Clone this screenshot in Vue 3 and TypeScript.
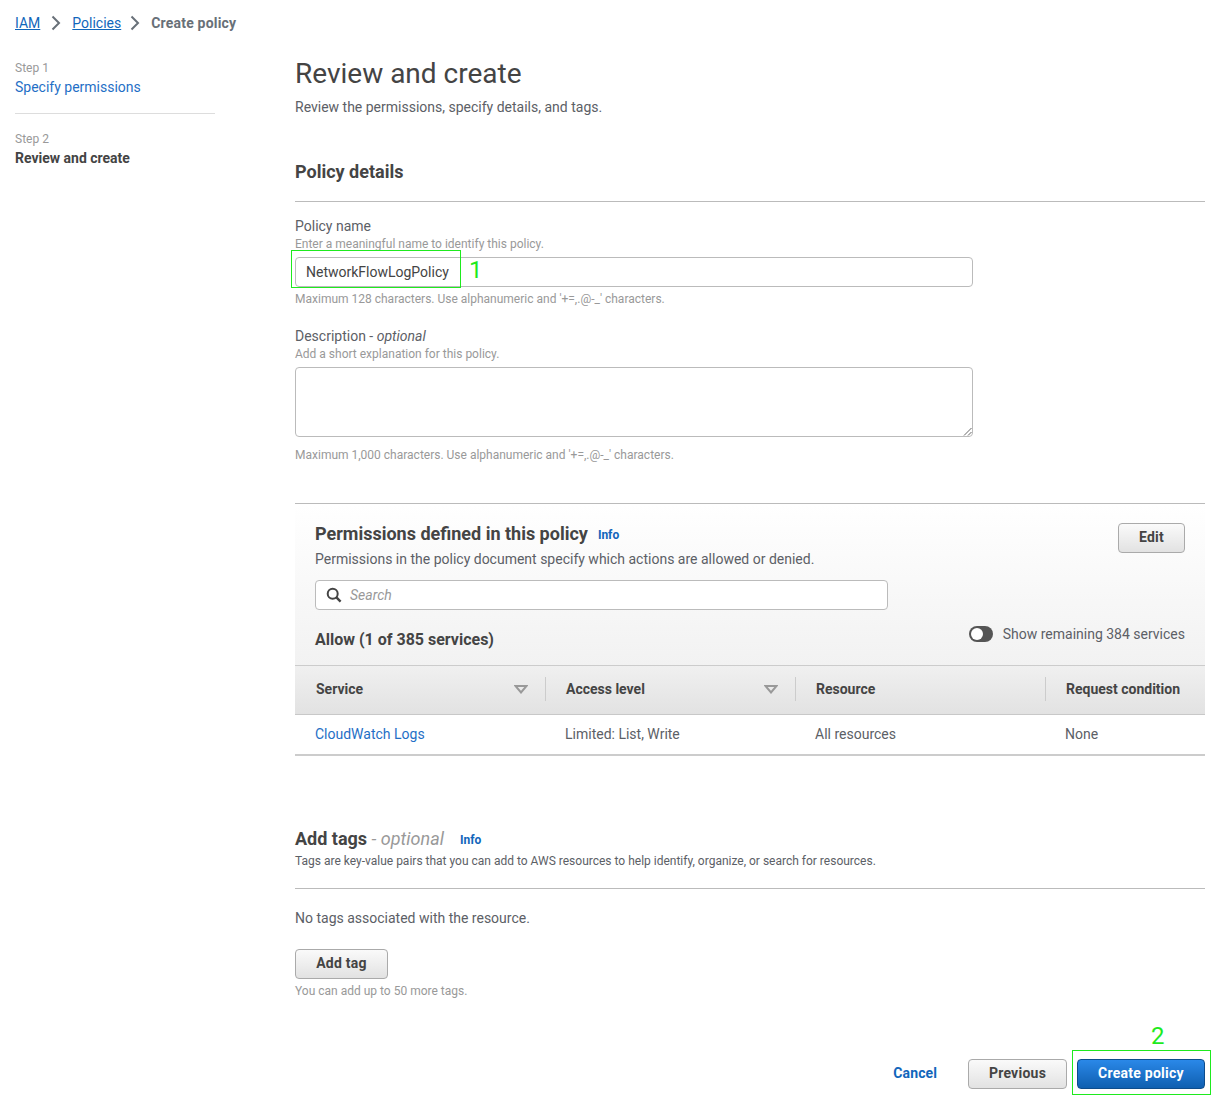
<template>
  <div class="page">
    <!-- breadcrumb -->
    <nav class="crumbs">
      <a class="crumb-link">IAM</a>
      <svg class="chev" width="10" height="16" viewBox="0 0 10 16"><path d="M1.5 1.5 L8 8 L1.5 14.5" fill="none" stroke="#687078" stroke-width="2" /></svg>
      <a class="crumb-link">Policies</a>
      <svg class="chev second" width="10" height="16" viewBox="0 0 10 16"><path d="M1.5 1.5 L8 8 L1.5 14.5" fill="none" stroke="#687078" stroke-width="2" /></svg>
      <span class="crumb-current">Create policy</span>
    </nav>

    <div class="layout">
      <!-- steps -->
      <aside class="steps">
        <div class="step first">
          <div class="step-num">Step 1</div>
          <a class="step-link">Specify permissions</a>
        </div>
        <div class="step">
          <div class="step-num">Step 2</div>
          <div class="step-active">Review and create</div>
        </div>
      </aside>

      <main class="main">
        <h1 class="title">Review and create</h1>
        <p class="subtitle">Review the permissions, specify details, and tags.</p>

        <h2 class="section-title">Policy details</h2>

        <div class="field name-field">
          <div class="label">Policy name</div>
          <div class="hint">Enter a meaningful name to identify this policy.</div>
          <div class="input-wrap">
            <div class="input">NetworkFlowLogPolicy</div>
            <div class="mark mark-one"></div>
            <span class="mark-num num-one">1</span>
          </div>
          <div class="hint after">Maximum 128 characters. Use alphanumeric and '+=,.@-_' characters.</div>
        </div>

        <div class="field desc-field">
          <div class="label">Description - <i>optional</i></div>
          <div class="hint">Add a short explanation for this policy.</div>
          <div class="textarea">
            <svg class="grip" width="9" height="9" viewBox="0 0 9 9"><path d="M8.5 1 L1 8.5 M8.5 5 L5 8.5" stroke="#666" stroke-width="1" /></svg>
          </div>
          <div class="hint after wide">Maximum 1,000 characters. Use alphanumeric and '+=,.@-_' characters.</div>
        </div>

        <!-- permissions -->
        <section class="perm">
          <div class="perm-top">
            <div class="perm-head">
              <div>
                <div class="perm-title-row">
                  <h2 class="perm-title">Permissions defined in this policy</h2>
                  <a class="info">Info</a>
                </div>
                <p class="perm-desc">Permissions in the policy document specify which actions are allowed or denied.</p>
              </div>
              <button class="btn edit">Edit</button>
            </div>
            <div class="search">
              <svg width="16" height="16" viewBox="0 0 16 16"><circle cx="6.7" cy="6.7" r="5" fill="none" stroke="#444" stroke-width="2" /><path d="M10.4 10.4 L14.6 14.6" stroke="#444" stroke-width="2.4" /></svg>
              <span>Search</span>
            </div>
            <div class="allow-row">
              <div class="allow">Allow (1 of 385 services)</div>
              <div class="toggle-wrap">
                <span class="toggle"><span class="knob"></span></span>
                <span class="toggle-label">Show remaining 384 services</span>
              </div>
            </div>
          </div>

          <div class="table-head">
            <div v-for="col in columns" :key="col.name" class="th">
              <span>{{ col.name }}</span>
              <svg v-if="col.sort" class="sort" width="14" height="9" viewBox="0 0 14 9"><path d="M1.5 1 H12.5 L7 7.5 Z" fill="none" stroke="#999" stroke-width="2" /></svg>
            </div>
          </div>
          <div class="table-row">
            <a class="cell-link">CloudWatch Logs</a>
            <span>Limited: List, Write</span>
            <span>All resources</span>
            <span>None</span>
          </div>
        </section>

        <!-- tags -->
        <section class="tags">
          <div class="tags-title-row">
            <h2 class="tags-title">Add tags <span class="opt">- optional</span></h2>
            <a class="info">Info</a>
          </div>
          <p class="tags-desc">Tags are key-value pairs that you can add to AWS resources to help identify, organize, or search for resources.</p>
          <p class="no-tags">No tags associated with the resource.</p>
          <button class="btn add">Add tag</button>
          <div class="hint after">You can add up to 50 more tags.</div>
        </section>

        <!-- footer buttons -->
        <footer class="actions">
          <a class="cancel">Cancel</a>
          <button class="btn prev">Previous</button>
          <div class="create-wrap">
            <button class="btn create">Create policy</button>
            <div class="mark mark-two"></div>
            <span class="mark-num num-two">2</span>
          </div>
        </footer>
      </main>
    </div>
  </div>
</template>

<script setup lang="ts">
interface Column {
  name: string
  sort: boolean
}

const columns: Column[] = [
  { name: 'Service', sort: true },
  { name: 'Access level', sort: true },
  { name: 'Resource', sort: false },
  { name: 'Request condition', sort: false }
]
</script>

<style>
html,
body {
  margin: 0;
  background: #fff;
}
</style>

<style scoped>
.page {
  width: 1230px;
  height: 1106px;
  overflow: hidden;
  box-sizing: border-box;
  padding: 0 25px 0 15px;
  font-family: Roboto, "Liberation Sans", sans-serif;
  font-size: 14px;
  color: #5c6066;
  line-height: 20px;
}

h1,
h2,
p {
  margin: 0;
}

/* breadcrumb */
.crumbs {
  display: flex;
  align-items: center;
  height: 20px;
  padding-top: 13px;
}

.crumb-link {
  color: #1166bb;
  text-decoration: underline;
}

.chev {
  margin: 0 16px 0 11px;
}

.chev + .crumb-link {
  margin-left: -5px;
}

.chev.second {
  margin: 0 11px 0 9px;
}

.crumb-current {
  font-weight: 700;
  color: #687078;
  letter-spacing: 0.2px;
}

.layout {
  display: flex;
}

/* steps */
.steps {
  width: 200px;
  margin-right: 80px;
  padding-top: 24px;
  flex-shrink: 0;
}

.step.first {
  padding-bottom: 16px;
  border-bottom: 1px solid #ddd;
  margin-bottom: 16px;
}

.step-num {
  margin-top: 2px;
  font-size: 12px;
  line-height: 18px;
  color: #999;
}

.step-link {
  color: #1f6fc6;
  display: block;
}

.step-active {
  font-weight: 700;
  color: #444;
}

/* main */
.main {
  flex: 1;
  min-width: 0;
}

.title {
  margin-top: 22px;
  font-size: 28px;
  line-height: 38px;
  font-weight: 400;
  color: #444;
}

.subtitle {
  margin-top: 4px;
}

.section-title {
  margin-top: 44px;
  padding-bottom: 18px;
  border-bottom: 1px solid #bbb;
  font-size: 18px;
  line-height: 22px;
  font-weight: 700;
  color: #444;
}

.field {
  width: 678px;
}

.name-field {
  margin-top: 14px;
}

.desc-field {
  margin-top: 19px;
}

.label {
  line-height: 21px;
}

.hint {
  font-size: 12px;
  line-height: 14px;
  color: #999;
}

.hint.after {
  margin-top: 4px;
  line-height: 16px;
}

.hint.after.wide {
  margin-top: 10px;
}

.input-wrap {
  position: relative;
  margin-top: 6px;
}

.input {
  height: 30px;
  box-sizing: border-box;
  border: 1px solid #bbb;
  border-radius: 4px;
  padding: 4px 10px;
  color: #444;
  background: #fff;
}

.textarea {
  position: relative;
  height: 70px;
  margin-top: 6px;
  box-sizing: border-box;
  border: 1px solid #bbb;
  border-radius: 4px;
  background: #fff;
}

.grip {
  position: absolute;
  right: 0;
  bottom: 0;
}

/* green annotations sit over the screen */
.mark {
  position: absolute;
  border: 1px solid #1eea1e;
  box-sizing: border-box;
  pointer-events: none;
}

.mark-num {
  position: absolute;
  color: #1eea1e;
  font-size: 24px;
  line-height: 28px;
}

.mark-one {
  left: -4px;
  top: -7px;
  width: 170px;
  height: 38px;
}

.num-one {
  left: 174px;
  top: -1px;
}

.mark-two {
  left: -5px;
  top: -9px;
  width: 139px;
  height: 45px;
}

.num-two {
  left: 74px;
  top: -37px;
}

/* permissions */
.perm {
  margin-top: 40px;
  border-top: 1px solid #bbb;
}

.perm-top {
  padding: 19px 20px 15px;
  height: 161px;
  box-sizing: border-box;
  background: linear-gradient(#fff, #f2f2f2);
}

.perm-head {
  display: flex;
  justify-content: space-between;
  align-items: flex-start;
}

.perm-title-row {
  display: flex;
  align-items: center;
  height: 22px;
}

.perm-title {
  font-size: 18px;
  line-height: 22px;
  font-weight: 700;
  color: #444;
}

.info {
  font-size: 12px;
  font-weight: 700;
  color: #1166bb;
  margin-left: 10px;
  padding-top: 2px;
}

.perm-desc {
  margin-top: 4px;
}

.search {
  display: flex;
  align-items: center;
  gap: 8px;
  width: 573px;
  height: 30px;
  margin-top: 11px;
  padding-left: 10px;
  box-sizing: border-box;
  border: 1px solid #bbb;
  border-radius: 4px;
  background: #fff;
  font-style: italic;
  color: #999;
}

.allow-row {
  display: flex;
  justify-content: space-between;
  align-items: flex-start;
  margin-top: 14px;
}

.allow {
  margin-top: 6px;
  font-size: 16px;
  line-height: 20px;
  font-weight: 700;
  color: #444;
}

.toggle-wrap {
  display: flex;
  align-items: center;
  gap: 10px;
}

.toggle {
  display: block;
  width: 24px;
  height: 16px;
  border-radius: 8px;
  background: #555;
  position: relative;
}

.knob {
  position: absolute;
  left: 2px;
  top: 2px;
  width: 12px;
  height: 12px;
  border-radius: 50%;
  background: #fff;
}

.table-head {
  display: grid;
  grid-template-columns: repeat(4, 250px);
  height: 50px;
  padding-bottom: 2px;
  box-sizing: border-box;
  border-top: 1px solid #ccc;
  border-bottom: 1px solid #c8c8c8;
  background: linear-gradient(#f0f0f0, #e2e2e2);
  align-items: center;
  font-weight: 700;
  color: #444;
}

.th {
  height: 24px;
  display: flex;
  align-items: center;
  justify-content: space-between;
  padding: 0 17px 0 20px;
  border-left: 1px solid #ccc;
  white-space: nowrap;
}

.th:first-child {
  border-left: none;
  padding-left: 21px;
  padding-right: 17px;
}

.table-row {
  display: grid;
  grid-template-columns: repeat(4, 250px);
  height: 41px;
  box-sizing: border-box;
  align-items: center;
  padding: 0 0 1px 20px;
  border-bottom: 2px solid #ccc;
}

.cell-link {
  color: #1f6fc6;
}

/* tags */
.tags {
  margin-top: 72px;
}

.tags-title-row {
  display: flex;
  align-items: center;
  height: 22px;
}

.tags-title {
  font-size: 18px;
  line-height: 22px;
  font-weight: 700;
  color: #444;
}

.opt {
  font-weight: 400;
  font-style: italic;
  color: #999;
}

.tags .info {
  margin-left: 16px;
}

.tags-desc {
  margin-top: 1px;
  padding-bottom: 17px;
  border-bottom: 1px solid #bbb;
  font-size: 12px;
  line-height: 20px;
}

.no-tags {
  margin-top: 19px;
}

.btn {
  font-family: inherit;
  font-size: 14px;
  font-weight: 700;
  letter-spacing: 0.25px;
  height: 30px;
  padding: 0 20px 2px;
  border: 1px solid #aaa;
  border-radius: 4px;
  background: linear-gradient(#fafafa, #e2e2e2);
  color: #444;
  box-sizing: border-box;
  white-space: nowrap;
}

.edit {
  width: 67px;
  padding: 0 0 2px;
}

.add {
  display: block;
  width: 93px;
  padding: 0 0 2px;
  margin-top: 21px;
}

/* footer */
.actions {
  display: flex;
  justify-content: flex-end;
  align-items: center;
  margin-top: 60px;
}

.cancel {
  font-weight: 700;
  color: #1166bb;
  letter-spacing: 0.1px;
  margin-right: 31px;
  padding-bottom: 2px;
}

.prev {
  width: 99px;
  padding: 0 0 2px;
  margin-right: 10px;
}

.create-wrap {
  position: relative;
  height: 30px;
}

.create {
  display: block;
  width: 128px;
  padding: 0 0 2px;
  color: #fff;
  border-color: #0d4c8c;
  background: linear-gradient(#2a88e8, #0f5fb0);
}
</style>
